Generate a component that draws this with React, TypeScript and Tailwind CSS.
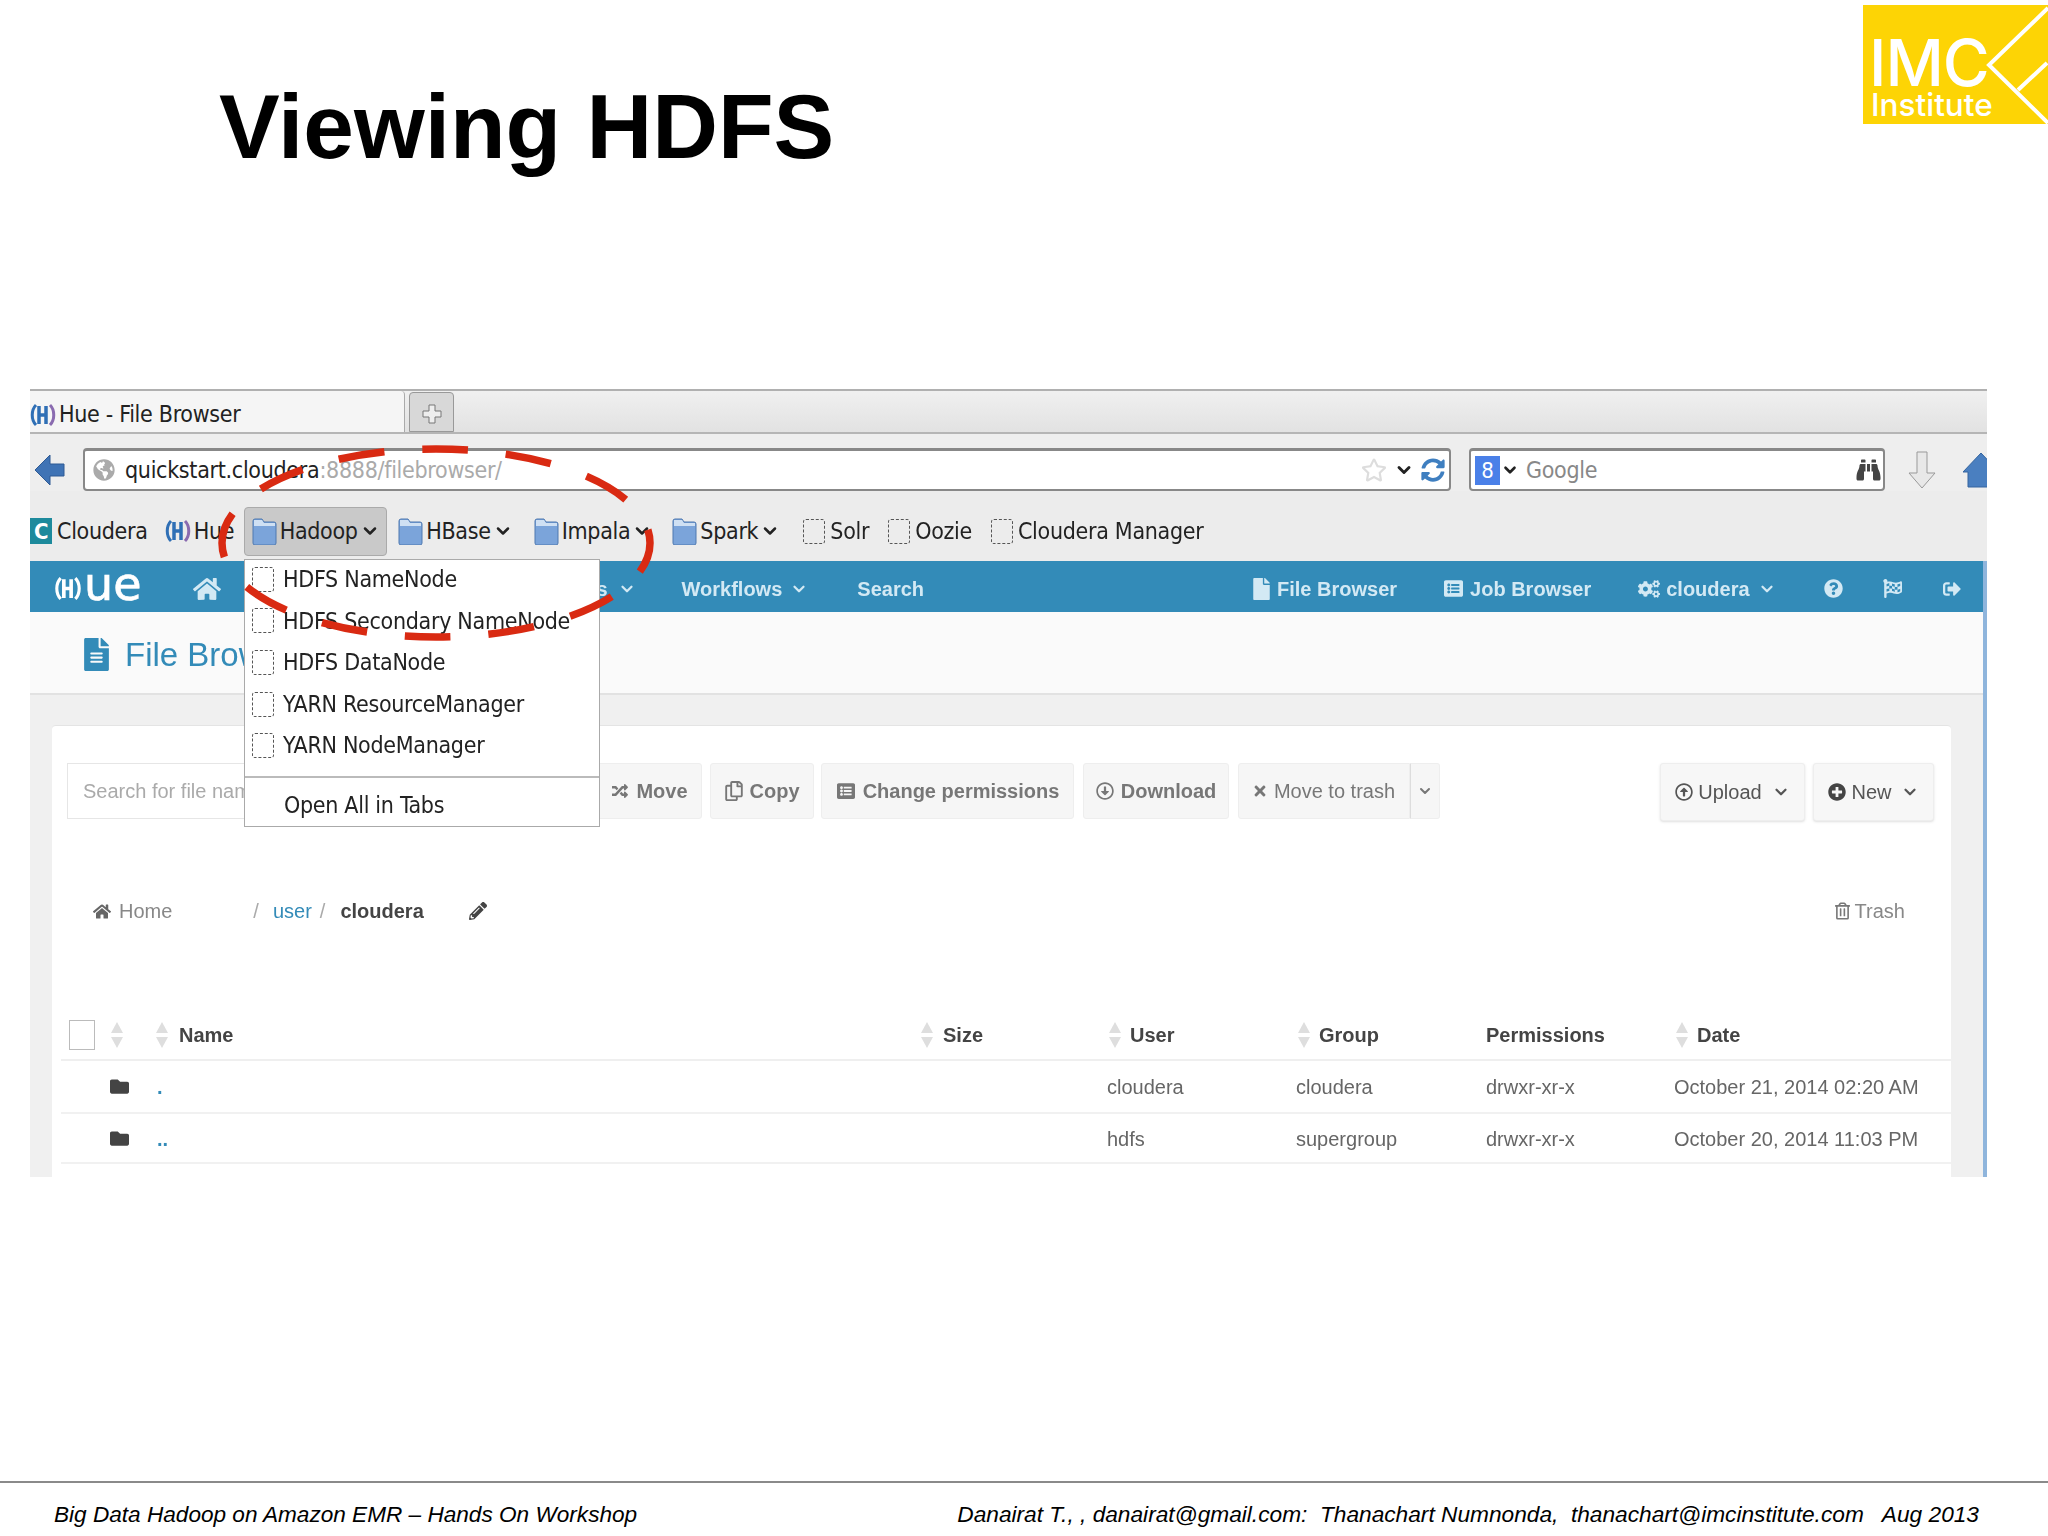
import { ChevronDown } from 'lucide-react';
import {
  FaBinoculars, FaCogs, FaFile, FaFileAlt, FaFlagCheckered, FaFolder, FaGlobeAmericas, FaHome,
  FaListAlt, FaPencilAlt, FaPlusCircle, FaQuestionCircle, FaRandom, FaRegArrowAltCircleDown,
  FaRegArrowAltCircleUp, FaRegCopy, FaRegStar, FaRegTrashAlt, FaSignOutAlt, FaSyncAlt, FaTimes,
} from 'react-icons/fa';

const chrome = "font-['DejaVu_Sans_Condensed','DejaVu_Sans',sans-serif] [font-stretch:condensed] text-[23px] tracking-[-0.3px] text-[#222]";

function HueMark({ className = '' }: { className?: string }) {
  return (
    <svg viewBox="0 0 26 24" className={className}>
      <path d="M6 2C1 7 1 17 6 22" fill="none" stroke="#2f6fb5" strokeWidth="3" />
      <path d="M20 2c5 5 5 15 0 20" fill="none" stroke="#8a6bb0" strokeWidth="3" />
      <path d="M9 3v18M16 3v18M9 12h7" fill="none" stroke="#2f6fb5" strokeWidth="3.5" />
    </svg>
  );
}

function BlueFolder() {
  return (
    <svg viewBox="0 0 25 28" className="h-[28px] w-[25px] shrink-0">
      <path d="M1 4q0-2 2-2h7l2 3h10q2 0 2 2v19q0 2-2 2H3q-2 0-2-2z" fill="#7ba4da" stroke="#4f79b0" />
      <path d="M2 3h8l2 3h11v3H2z" fill="#cfe0f3" />
    </svg>
  );
}

function DashedBox({ className = '' }: { className?: string }) {
  return <span className={`block h-[25px] w-[22px] shrink-0 rounded-[3px] border border-dashed border-[#555] ${className}`} />;
}

function SortArrows() {
  return (
    <svg viewBox="0 0 14 26" className="h-[26px] w-[14px] shrink-0">
      <path d="M7 0l6 11H1z" fill="#dedede" />
      <path d="M7 26l6-11H1z" fill="#dedede" />
    </svg>
  );
}

function BookmarkFolder({ label, active = false, className = '' }: { label: string; active?: boolean; className?: string }) {
  return (
    <div className={`flex h-[49px] items-center rounded-[4px] ${active ? 'border border-[#aaa] bg-[#c9c9c9]' : ''} ${className}`}>
      <BlueFolder />
      <span className="ml-[3px]">{label}</span>
      <ChevronDown className="ml-[2px] h-[20px] w-[20px] text-[#222]" strokeWidth={3} />
    </div>
  );
}

function ToolButton({ children, className = '' }: { children: React.ReactNode; className?: string }) {
  return (
    <div className={`flex h-[56px] items-center justify-center gap-[7px] rounded-[3px] border border-[#eee] bg-[#f6f6f6] text-[20px] font-bold text-[#777] ${className}`}>
      {children}
    </div>
  );
}

const tableCols = 'grid grid-cols-[96px_763px_187px_189px_190px_188px_1fr] items-center';

function SortHead({ label }: { label: string }) {
  return (
    <div className="flex items-center gap-[8px] pl-[1px]">
      <SortArrows />
      <span>{label}</span>
    </div>
  );
}

function FileRow({ name, user, group, date, height }: { name: string; user: string; group: string; date: string; height: string }) {
  return (
    <div className={`${tableCols} ${height} border-b-2 border-[#f1f1f1] text-[20px] text-[#666]`}>
      <div className="flex justify-end pr-[28px]">
        <FaFolder className="h-[19px] w-[19px] text-[#444]" />
      </div>
      <div className="font-bold text-[#338bb8]">{name}</div>
      <div />
      <div>{user}</div>
      <div>{group}</div>
      <div>drwxr-xr-x</div>
      <div className="whitespace-nowrap">{date}</div>
    </div>
  );
}

function HueLogo() {
  return (
    <div className="ml-[24px] flex items-center text-white">
      <svg viewBox="0 0 26 24" className="h-[25px] w-[28px]">
        <path d="M6 2C1 7 1 17 6 22M20 2c5 5 5 15 0 20" fill="none" stroke="#fff" strokeWidth="3" />
        <path d="M9 3v18M16 3v18M9 12h7" fill="none" stroke="#fff" strokeWidth="3.5" />
      </svg>
      <span className="ml-[2px] -mt-[9px] font-['DejaVu_Sans',sans-serif] text-[46px] font-normal leading-none [-webkit-text-stroke:0.7px_white]">ue</span>
    </div>
  );
}

export default function App() {
  return (
    <div className="flex h-[1536px] w-[2048px] flex-col overflow-hidden bg-white font-['Liberation_Sans',Arial,sans-serif]">
      {/* slide title and logo */}
      <header className="flex h-[389px] shrink-0 items-start justify-between">
        <h1 className="pl-[219px] pt-[82px] text-[91px] font-bold leading-[90px] text-black">Viewing HDFS</h1>
        <div className="relative mt-[5px] h-[119px] w-[185px] bg-[#fdd405] pl-[6px] pt-[35px] font-['Inter',sans-serif] font-medium text-white">
          <div className="text-[64px] leading-[46px] tracking-[-1px]">IMC</div>
          <div className="ml-[2px] mt-[5px] text-[31.5px] leading-[28px]">Institute</div>
          <svg viewBox="0 0 185 119" className="absolute inset-0 h-full w-full">
            <path d="M185 3L126 60l59 58M184 58l-29 27" fill="none" stroke="#fff" strokeWidth="4" />
          </svg>
        </div>
      </header>

      {/* embedded browser screenshot */}
      <section className="relative ml-[30px] h-[788px] w-[1957px] shrink-0 overflow-hidden">
        <div className="flex h-full flex-col blur-[0.5px]">
          {/* tab strip */}
          <div className={`flex h-[45px] shrink-0 items-end border-b-2 border-t-2 border-b-[#b5b5b5] border-t-[#b0b0b0] bg-gradient-to-b from-[#f0f0f0] to-[#e2e2e2] ${chrome}`}>
            <div className="flex h-[41px] w-[375px] items-center rounded-tr-[4px] border-r border-[#aaa] bg-[#f5f5f5] pt-[6px]">
              <HueMark className="h-[24px] w-[26px]" />
              <span className="ml-[3px]">Hue - File Browser</span>
            </div>
            <div className="ml-[4px] flex h-[40px] w-[45px] items-center justify-center rounded-t-[4px] border border-[#999] bg-[#d8d8d8] pt-[3px] text-[#666]">
              <svg viewBox="0 0 20 20" className="h-[20px] w-[20px]">
                <path d="M7 1h6v6h6v6h-6v6H7v-6H1V7h6z" fill="#eee" stroke="#777" />
              </svg>
            </div>
          </div>

          {/* address bar */}
          <div className={`flex h-[57px] shrink-0 items-center overflow-hidden bg-[#eeeeee] pt-[14px] ${chrome}`}>
            <svg viewBox="0 0 30 32" className="ml-[5px] h-[32px] w-[30px] shrink-0">
              <path d="M0 16L15 1v9h14v12H15v9z" fill="#3f73b5" stroke="#2e5a94" />
            </svg>
            <div className="ml-[18px] flex h-[43px] w-[1368px] shrink-0 items-center rounded-[4px] border-2 border-[#888] border-t-[3px] bg-white pl-[8px] pr-[4px]">
              <FaGlobeAmericas className="h-[22px] w-[22px] text-[#aaa]" />
              <span className="ml-[10px]">quickstart.cloudera</span>
              <span className="text-[#aaa]">:8888/filebrowser/</span>
              <FaRegStar className="ml-auto h-[26px] w-[26px] text-[#ddd]" />
              <ChevronDown className="ml-[7px] h-[20px] w-[20px] text-[#222]" strokeWidth={3.5} />
              <FaSyncAlt className="ml-[7px] h-[24px] w-[24px] text-[#3f7fc0]" />
            </div>
            <div className="ml-[18px] flex h-[43px] w-[416px] shrink-0 items-center rounded-[4px] border-2 border-[#888] border-t-[3px] bg-white pl-[4px] pr-[2px]">
              <span className="flex h-[29px] w-[25px] items-center justify-center bg-[#4a80e8] text-[22px] text-white">8</span>
              <ChevronDown className="ml-[1px] h-[18px] w-[18px] text-[#222]" strokeWidth={3.5} />
              <span className="ml-[7px] text-[#888]">Google</span>
              <FaBinoculars className="ml-auto h-[24px] w-[25px] text-[#444]" />
            </div>
            <svg viewBox="0 0 30 38" className="ml-[22px] h-[38px] w-[30px] shrink-0">
              <path d="M10 1h10v21h8L15 37 2 22h8z" fill="#e8e8e8" stroke="#999" />
            </svg>
            <svg viewBox="0 0 36 36" className="ml-[26px] h-[36px] w-[36px] shrink-0">
              <path d="M18 1L0 20h5v15h26V20h5z" fill="#4a7fc0" stroke="#34659f" />
            </svg>
          </div>

          {/* bookmarks */}
          <div className={`flex h-[70px] shrink-0 items-center bg-[#ececec] pt-[10px] ${chrome}`}>
            <span className="flex h-[26px] w-[22px] items-center justify-center bg-[#1d8a9c] text-[22px] font-bold text-white">C</span>
            <span className="ml-[5px]">Cloudera</span>
            <HueMark className="ml-[17px] h-[24px] w-[26px]" />
            <span className="ml-[3px]">Hue</span>
            <BookmarkFolder label="Hadoop" active className="ml-[10px] w-[143px] justify-center" />
            <BookmarkFolder label="HBase" className="ml-[11px]" />
            <BookmarkFolder label="Impala" className="ml-[21px]" />
            <BookmarkFolder label="Spark" className="ml-[20px]" />
            <DashedBox className="ml-[23px]" />
            <span className="ml-[5px]">Solr</span>
            <DashedBox className="ml-[19px]" />
            <span className="ml-[5px]">Oozie</span>
            <DashedBox className="ml-[19px]" />
            <span className="ml-[5px]">Cloudera Manager</span>
          </div>

          {/* Hue page */}
          <div className="flex min-h-0 flex-1 flex-col border-r-[4px] border-[#8fb5dc]">
            <nav className="flex h-[51px] shrink-0 items-center bg-[#338bb8] pt-[4px] text-[20px] font-bold text-[#d3e9f4]">
              <HueLogo />
              <FaHome className="ml-[52px] h-[26px] w-[28px]" />
              <span className="ml-[246px]">Data Browsers</span>
              <ChevronDown className="ml-[10px] h-[18px] w-[18px]" strokeWidth={3} />
              <span className="ml-[46px]">Workflows</span>
              <ChevronDown className="ml-[8px] h-[18px] w-[18px]" strokeWidth={3} />
              <span className="ml-[49px]">Search</span>
              <FaFile className="ml-[329px] h-[22px] w-[17px]" />
              <span className="ml-[7px]">File Browser</span>
              <FaListAlt className="ml-[47px] h-[19px] w-[19px]" />
              <span className="ml-[7px]">Job Browser</span>
              <FaCogs className="ml-[47px] h-[20px] w-[22px]" />
              <span className="ml-[6px]">cloudera</span>
              <ChevronDown className="ml-[8px] h-[18px] w-[18px]" strokeWidth={3} />
              <FaQuestionCircle className="ml-[48px] h-[19px] w-[19px]" />
              <FaFlagCheckered className="ml-[40px] h-[19px] w-[19px]" />
              <FaSignOutAlt className="ml-[41px] h-[18px] w-[18px]" />
            </nav>

            <div className="flex h-[83px] shrink-0 items-center border-b-2 border-[#e2e2e2] bg-[#fafafa] pl-[54px] pt-[4px] text-[33px] text-[#338bb8]">
              <FaFileAlt className="h-[33px] w-[25px]" />
              <span className="ml-[16px]">File Browser</span>
            </div>

            <div className="min-h-0 flex-1 bg-[#f0f0f0] pl-[22px] pr-[32px] pt-[30px]">
              <div className="h-full rounded-t-[4px] border-t border-[#e4e4e4] bg-white">
                {/* actions */}
                <div className="flex items-start pl-[15px] pr-[17px] pt-[37px]">
                  <div className="flex h-[56px] w-[520px] items-center border border-[#e6e6e6] bg-white pl-[15px] text-[20px] text-[#aaa]">
                    Search for file name
                  </div>
                  <ToolButton className="ml-[10px] w-[105px]"><FaRandom className="h-[16px] w-[18px]" />Move</ToolButton>
                  <ToolButton className="ml-[8px] w-[104px]"><FaRegCopy className="h-[20px] w-[18px]" />Copy</ToolButton>
                  <ToolButton className="ml-[7px] w-[253px]"><FaListAlt className="h-[18px] w-[20px]" />Change permissions</ToolButton>
                  <ToolButton className="ml-[9px] w-[146px]"><FaRegArrowAltCircleDown className="h-[18px] w-[18px]" />Download</ToolButton>
                  <ToolButton className="ml-[9px] w-[172px] rounded-r-none font-normal"><FaTimes className="h-[16px] w-[14px]" />Move to trash</ToolButton>
                  <ToolButton className="w-[30px] rounded-l-none border-l-[#ddd]"><ChevronDown className="h-[16px] w-[16px]" strokeWidth={3} /></ToolButton>
                  <div className="ml-auto flex gap-[8px] text-[20px] text-[#555]">
                    <div className="flex h-[58px] w-[145px] items-center justify-center rounded-[3px] border border-[#eee] bg-[#f7f7f7] shadow-sm">
                      <FaRegArrowAltCircleUp className="h-[18px] w-[18px]" />
                      <span className="ml-[5px]">Upload</span>
                      <ChevronDown className="ml-[10px] h-[18px] w-[18px]" strokeWidth={3} />
                    </div>
                    <div className="flex h-[58px] w-[121px] items-center justify-center rounded-[3px] border border-[#eee] bg-[#f7f7f7] shadow-sm">
                      <FaPlusCircle className="h-[18px] w-[18px] text-[#444]" />
                      <span className="ml-[5px]">New</span>
                      <ChevronDown className="ml-[9px] h-[18px] w-[18px]" strokeWidth={3} />
                    </div>
                  </div>
                </div>

                {/* breadcrumb */}
                <div className="mt-[70px] flex h-[40px] items-center pl-[41px] pr-[46px] text-[20px] text-[#888]">
                  <FaHome className="h-[17px] w-[18px] text-[#666]" />
                  <span className="ml-[8px]">Home</span>
                  <span className="ml-[81px] text-[#aaa]">/</span>
                  <span className="ml-[14px] text-[#338bb8]">user</span>
                  <span className="ml-[8px] text-[#aaa]">/</span>
                  <span className="ml-[15px] font-bold text-[#444]">cloudera</span>
                  <FaPencilAlt className="ml-[45px] h-[18px] w-[18px] text-[#444]" />
                  <FaRegTrashAlt className="ml-auto h-[18px] w-[15px] text-[#777]" />
                  <span className="ml-[5px]">Trash</span>
                </div>

                {/* files */}
                <div className="mt-[80px] pl-[9px]">
                  <div className={`${tableCols} h-[50px] border-b-2 border-[#efefef] text-[20px] font-bold text-[#444]`}>
                    <div className="flex items-center pl-[8px]">
                      <span className="h-[30px] w-[26px] border border-[#bbb] bg-white" />
                      <span className="ml-[15px]"><SortArrows /></span>
                    </div>
                    <div className="-ml-[2px] flex items-center gap-[10px]"><SortArrows /><span>Name</span></div>
                    <div className="flex items-center gap-[9px]"><SortArrows /><span>Size</span></div>
                    <SortHead label="User" />
                    <SortHead label="Group" />
                    <div>Permissions</div>
                    <SortHead label="Date" />
                  </div>
                  <FileRow name="." user="cloudera" group="cloudera" date="October 21, 2014 02:20 AM" height="h-[53px]" />
                  <FileRow name=".." user="hdfs" group="supergroup" date="October 20, 2014 11:03 PM" height="h-[50px] pt-[1px]" />
                </div>
              </div>
            </div>
          </div>
        </div>

        {/* open Hadoop bookmark menu */}
        <div className={`absolute left-[214px] top-[170px] w-[356px] border border-[#aaa] bg-white blur-[0.4px] ${chrome}`}>
          {['HDFS NameNode', 'HDFS Secondary NameNode', 'HDFS DataNode', 'YARN ResourceManager', 'YARN NodeManager'].map((item) => (
            <div key={item} className="flex h-[41.6px] items-center pb-[3px] pl-[7px]">
              <DashedBox />
              <span className="ml-[9px] whitespace-nowrap">{item}</span>
            </div>
          ))}
          <div className="mt-[8px] flex h-[50px] items-center border-t-2 border-[#bbb] pl-[39px] pt-[6px]">Open All in Tabs</div>
        </div>
      </section>

      {/* footer */}
      <footer className="mt-auto flex h-[55px] shrink-0 items-center justify-between whitespace-pre border-t-2 border-[#8a8a8a] pl-[54px] pr-[69px] pt-[10px] italic text-black">
        <span className="text-[22.6px]">Big Data Hadoop on Amazon EMR – Hands On Workshop</span>
        <span className="text-[22.7px]">Danairat T., , danairat@gmail.com:  Thanachart Numnonda,  thanachart@imcinstitute.com   Aug 2013</span>
      </footer>

      {/* red dashed ring drawn over the screenshot */}
      <svg viewBox="0 0 2048 1536" className="pointer-events-none absolute left-0 top-0 h-[1536px] w-[2048px]">
        <ellipse cx="436" cy="543" rx="214" ry="94" fill="none" stroke="#d92a12" strokeWidth="7.5" strokeDasharray="46 37.8" strokeDashoffset="15" />
      </svg>
    </div>
  );
}
